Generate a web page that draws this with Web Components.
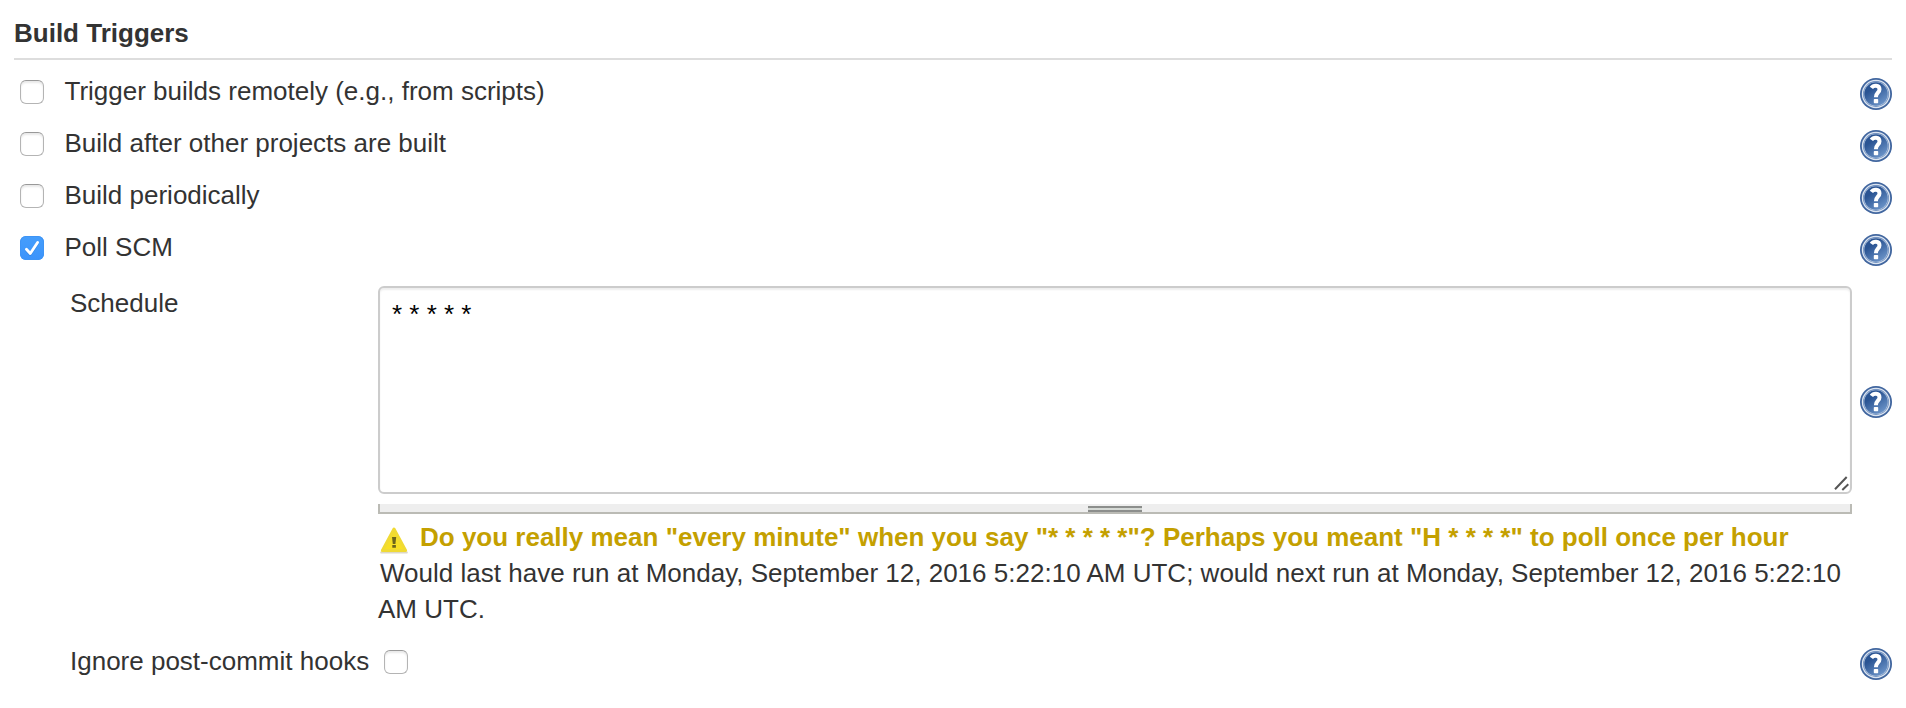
<!DOCTYPE html>
<html lang="en">
<head>
<meta charset="utf-8">
<title>Build Triggers</title>
<style>
html,body{margin:0;background:#fff}
body{font:26px/36px "Liberation Sans",Arial,Helvetica,sans-serif;color:#333;width:1906px;height:708px;overflow:hidden}
</style>
</head>
<body>
<build-triggers></build-triggers>
<script>
const define = (name, html, init) => customElements.define(name, class extends HTMLElement {
  constructor() {
    super();
    const t = document.createElement('template');
    t.innerHTML = html;
    this.attachShadow({mode: 'open'}).append(t.content.cloneNode(true));
    if (init) init(this);
  }
});

define('help-icon', `<style>:host{display:block;width:32px;height:32px;flex:none}svg{display:block}</style>
<svg width="32" height="32" viewBox="0 0 32 32">
<defs><linearGradient id="g" x1=".1" y1="0" x2=".8" y2="1"><stop offset=".3" stop-color="#2a5493"/><stop offset="1" stop-color="#7098cc"/></linearGradient></defs>
<circle cx="16" cy="16" r="16" fill="#41669f"/>
<circle cx="16" cy="16" r="14.2" fill="#dbe4f0"/>
<circle cx="16" cy="16" r="12.9" fill="#5f83b8"/>
<circle cx="16" cy="16" r="12.3" fill="#b4c6df"/>
<circle cx="16" cy="16" r="11.7" fill="url(#g)"/>
<path d="M11.4 9.8C13.4 7 19.4 6.6 19.5 11.2C19.6 14.9 15.9 14.6 15.9 19.2" fill="none" stroke="#fff" stroke-width="4"/>
<rect x="13.8" y="21" width="4.4" height="4.2" rx=".7" fill="#fff"/>
</svg>`);

define('warning-icon', `<style>:host{display:block;width:32px;height:32px;flex:none}svg{display:block}</style>
<svg width="32" height="32" viewBox="0 0 32 32">
<defs><linearGradient id="y" x1="0" y1="0" x2="0" y2="1"><stop offset="0" stop-color="#f0dc30"/><stop offset="1" stop-color="#f9e022"/></linearGradient></defs>
<path d="M3.5 28.4H28.5" stroke="#b9b08a" stroke-opacity=".5" stroke-width="2.4" stroke-linecap="round"/>
<path d="M16 5L27.6 26.5H4.4Z" fill="url(#y)" stroke="#f0da34" stroke-width="3" stroke-linejoin="round"/>
<path d="M14 13h4.2l-.8 7h-2.6zM14.3 20.9h3.6v2.8h-3.6z" fill="#6c641c"/>
</svg>`);

define('check-box', `<style>
:host{display:block;box-sizing:border-box;width:24px;height:24px;flex:none;border:1.5px solid #b4b4b4;border-top-color:#999;border-radius:6px;background:#fff;box-shadow:inset 0 2px 2px #e9e9e9}
svg{display:none}
:host([checked]){border:0;background:linear-gradient(#459efc,#3b93fb);box-shadow:inset 0 0 0 1px #3e94f5}
:host([checked]) svg{display:block}
</style>
<svg width="24" height="24" viewBox="0 0 24 24"><path d="M6.4 13.2L10.3 17.5L17.6 6.4" fill="none" stroke="#2878cf" stroke-opacity=".5" stroke-width="2.8" stroke-linecap="round" stroke-linejoin="round" transform="translate(0 1)"/><path d="M6.4 13.2L10.3 17.5L17.6 6.4" fill="none" stroke="#fff" stroke-width="2.8" stroke-linecap="round" stroke-linejoin="round"/></svg>`);

define('section-title', `<style>
:host{display:block;height:43px;padding-top:15px;border-bottom:2px solid #ddd;font-weight:bold}
</style><slot></slot>`);

define('trigger-row', `<style>
:host{display:flex;height:52px;padding-left:6px;box-sizing:border-box}
check-box{margin:12px 20.5px 0 0}
span{flex:1;padding-top:5px}
help-icon{margin-top:10px}
</style><check-box></check-box><span><slot></slot></span><help-icon></help-icon>`,
 el => { if (el.hasAttribute('checked')) el.shadowRoot.querySelector('check-box').setAttribute('checked', ''); });

define('schedule-input', `<style>
:host{display:block}
.area{display:flex;justify-content:space-between;box-sizing:border-box;height:208px;border:2px solid #ccc;border-radius:6px;padding:11px 0 0 12px;box-shadow:inset 0 2px 2px #eee;color:#000;line-height:30px}
.area svg{align-self:flex-end}
.handle{display:flex;justify-content:center;box-sizing:border-box;height:10px;margin-top:10px;padding-top:2px;border:solid #bbbbb5;border-width:0 2px 2px;background:#eee}
i{box-sizing:border-box;width:54px;height:6px;border:solid #8c8e8c;border-width:2px 0;background:#d6dad6}
</style>
<div class="area"><span><slot></slot></span><svg width="16" height="16" viewBox="0 0 16 16"><path d="M1 13.3L12.7 1M8.3 14L14.3 8.3" stroke="#555" stroke-width="2"/></svg></div>
<div class="handle"><i></i></div>`);

define('schedule-message', `<style>
:host{display:block}
.warn{display:flex;height:36px;color:#c4a000;font-weight:bold;white-space:nowrap}
.warn warning-icon{margin:5px 10px 0 0}
.info{white-space:nowrap}
.info ::slotted(*){display:block}
</style><div class="warn"><warning-icon></warning-icon><slot name="warning"></slot></div><div class="info"><slot></slot></div>`);

define('build-triggers', `<style>
:host{display:block;padding:0 14px}
.rows{padding-top:8px}
.schedule{display:grid;grid-template-columns:308px 1474px 8px 32px;padding-left:56px;margin-top:10px}
.label{margin-top:-1px}
.field{min-width:0}
.schedule help-icon{grid-column:4;margin-top:100px}
schedule-message{margin-top:5px}
.first{text-indent:2px;letter-spacing:.01px}
.hooks{display:flex;padding-left:56px;margin-top:16px}
.hooks check-box{margin:7px auto 0 15px}
.hooks help-icon{margin-top:5px}
</style>
<section-title>Build Triggers</section-title>
<div class="rows">
<trigger-row>Trigger builds remotely (e.g., from scripts)</trigger-row>
<trigger-row>Build after other projects are built</trigger-row>
<trigger-row>Build periodically</trigger-row>
<trigger-row checked>Poll SCM</trigger-row>
</div>
<div class="schedule"><div class="label">Schedule</div>
<div class="field"><schedule-input>* * * * *</schedule-input>
<schedule-message><span slot="warning">Do you really mean "every minute" when you say "* * * * *"? Perhaps you meant "H * * * *" to poll once per hour</span><span class="first">Would last have run at Monday, September 12, 2016 5:22:10 AM UTC; would next run at Monday, September 12, 2016 5:22:10</span><span>AM UTC.</span></schedule-message></div>
<help-icon></help-icon></div>
<div class="hooks"><span>Ignore post-commit hooks</span><check-box></check-box><help-icon></help-icon></div>`);
</script>
</body>
</html>
